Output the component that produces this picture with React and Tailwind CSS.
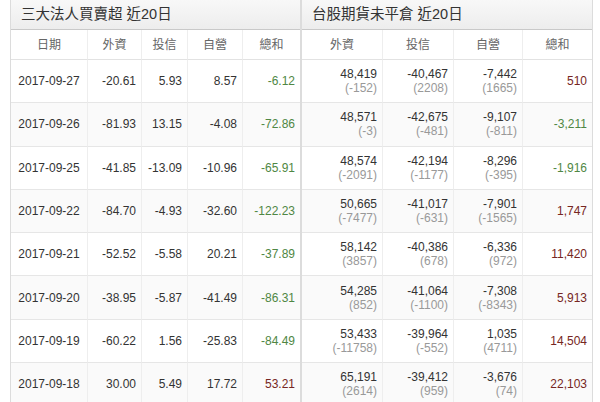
const font = { fontFamily: '"Liberation Sans", "Noto Sans CJK TC", sans-serif' };

const instRows = [
  ["2017-09-27", "-20.61", "5.93", "8.57", "-6.12"],
  ["2017-09-26", "-81.93", "13.15", "-4.08", "-72.86"],
  ["2017-09-25", "-41.85", "-13.09", "-10.96", "-65.91"],
  ["2017-09-22", "-84.70", "-4.93", "-32.60", "-122.23"],
  ["2017-09-21", "-52.52", "-5.58", "20.21", "-37.89"],
  ["2017-09-20", "-38.95", "-5.87", "-41.49", "-86.31"],
  ["2017-09-19", "-60.22", "1.56", "-25.83", "-84.49"],
  ["2017-09-18", "30.00", "5.49", "17.72", "53.21"],
];

const futRows = [
  [["48,419", "(-152)"], ["-40,467", "(2208)"], ["-7,442", "(1665)"], "510"],
  [["48,571", "(-3)"], ["-42,675", "(-481)"], ["-9,107", "(-811)"], "-3,211"],
  [["48,574", "(-2091)"], ["-42,194", "(-1177)"], ["-8,296", "(-395)"], "-1,916"],
  [["50,665", "(-7477)"], ["-41,017", "(-631)"], ["-7,901", "(-1565)"], "1,747"],
  [["58,142", "(3857)"], ["-40,386", "(678)"], ["-6,336", "(972)"], "11,420"],
  [["54,285", "(852)"], ["-41,064", "(-1100)"], ["-7,308", "(-8343)"], "5,913"],
  [["53,433", "(-11758)"], ["-39,964", "(-552)"], ["1,035", "(4711)"], "14,504"],
  [["65,191", "(2614)"], ["-39,412", "(959)"], ["-3,676", "(74)"], "22,103"],
];

function totalColor(v) {
  return v.startsWith("-") ? "text-[#4f8744]" : "text-[#762622]";
}

function PanelTitle({ children }) {
  return (
    <div className="flex h-[30px] items-center border-b border-[#c9c9c9] bg-gradient-to-b from-[#f8f8f8] to-[#ededed] pl-[10px] text-[14.5px] text-[#333]">
      {children}
    </div>
  );
}

function HeadCell({ children, last }) {
  return (
    <div
      className={`flex h-[30px] items-center justify-center border-b border-[#e2e2e2] text-[12px] text-[#666] ${
        last ? "" : "border-r border-r-[#eeeeee]"
      }`}
    >
      {children}
    </div>
  );
}

function Cell({ children, last, center, striped, color = "text-[#333]" }) {
  return (
    <div
      className={`flex h-[43.3px] items-center border-b border-[#e6e6e6] px-[5px] text-[12px] ${color} ${
        center ? "justify-center" : "justify-end"
      } ${last ? "" : "border-r border-r-[#eeeeee]"} ${striped ? "bg-[#fafafa]" : "bg-white"}`}
    >
      {children}
    </div>
  );
}

function InstPanel() {
  return (
    <div className="w-[291px] border-x border-[#dcdcdc]">
      <PanelTitle>三大法人買賣超 近20日</PanelTitle>
      <div className="grid grid-cols-[77px_54px_46px_55px_1fr]">
        {["日期", "外資", "投信", "自營", "總和"].map((h, i) => (
          <HeadCell key={h} last={i === 4}>
            {h}
          </HeadCell>
        ))}
        {instRows.map((r, ri) =>
          r.map((v, ci) => (
            <Cell
              key={`${ri}-${ci}`}
              center={ci === 0}
              last={ci === 4}
              striped={ri % 2 === 1}
              color={ci === 4 ? totalColor(v) : undefined}
            >
              {v}
            </Cell>
          ))
        )}
      </div>
    </div>
  );
}

function FutPanel() {
  return (
    <div className="w-[292px] border-x border-[#dcdcdc]">
      <PanelTitle>台股期貨未平倉 近20日</PanelTitle>
      <div className="grid grid-cols-[81px_71px_69px_1fr]">
        {["外資", "投信", "自營", "總和"].map((h, i) => (
          <HeadCell key={h} last={i === 3}>
            {h}
          </HeadCell>
        ))}
        {futRows.map((r, ri) =>
          r.map((v, ci) =>
            ci === 3 ? (
              <Cell key={`${ri}-${ci}`} last striped={ri % 2 === 1} color={totalColor(v)}>
                {v}
              </Cell>
            ) : (
              <Cell key={`${ri}-${ci}`} striped={ri % 2 === 1}>
                <div className="flex flex-col items-end leading-[14px]">
                  <span>{v[0]}</span>
                  <span className="text-[#999]">{v[1]}</span>
                </div>
              </Cell>
            )
          )
        )}
      </div>
    </div>
  );
}

export default function App() {
  return (
    <div className="flex h-[402px] w-[600px] overflow-hidden bg-white pl-[10px]" style={font}>
      <InstPanel />
      <FutPanel />
    </div>
  );
}
